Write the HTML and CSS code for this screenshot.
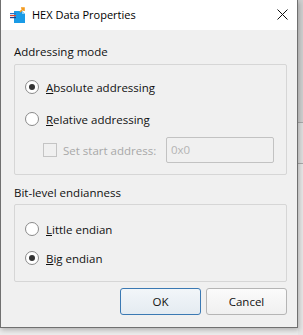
FILE: index.html
```html
<!DOCTYPE html>
<html lang="en">
<head>
    <meta charset="UTF-8">
    <title>HEX Data Properties</title>
    <link rel="stylesheet" href="styles.css">
</head>
<body>
    <div class="window">
        <div class="titlebar">
            <svg class="app-icon" width="17" height="17" viewBox="0 0 17 17">
                <path d="M4 5 h8 l3 3 v9 h-11 z" fill="#1a9be6"/>
                <path d="M12 5 v3 h3 z" fill="#8fd0f5"/>
                <path d="M10 6 l4 -4 M11 2 h3 v3" stroke="#f39a1e" stroke-width="1.6" fill="none"/>
                <rect x="0" y="7" width="6" height="1.2" fill="#2672c8"/>
                <rect x="0" y="9" width="6" height="1.2" fill="#e0432a"/>
                <rect x="0" y="11" width="6" height="1.2" fill="#1e3f8c"/>
            </svg>
            <span class="title">HEX Data Properties</span>
            <svg class="close" width="11" height="11" viewBox="0 0 11 11">
                <path d="M0.5 0.5 L10.5 10.5 M10.5 0.5 L0.5 10.5" stroke="#111" stroke-width="1"/>
            </svg>
        </div>
        <div class="content">
            <div class="group-label">Addressing mode</div>
            <div class="group group-address">
                <div class="row">
                    <span class="radio checked"></span>
                    <span><u>A</u>bsolute addressing</span>
                </div>
                <div class="row">
                    <span class="radio"></span>
                    <span><u>R</u>elative addressing</span>
                </div>
                <div class="row row-start">
                    <span class="checkbox"></span>
                    <span class="disabled">Set start address:</span>
                    <div class="text-input">0x0</div>
                </div>
            </div>

            <div class="group-label second">Bit-level endianness</div>
            <div class="group group-endian">
                <div class="row">
                    <span class="radio"></span>
                    <span><u>L</u>ittle endian</span>
                </div>
                <div class="row">
                    <span class="radio checked"></span>
                    <span><u>B</u>ig endian</span>
                </div>
            </div>

            <div class="buttons">
                <button class="btn default">OK</button>
                <button class="btn">Cancel</button>
            </div>
        </div>
    </div>
    <div class="behind">
        <div class="behind-top"></div>
        <div class="behind-mid"></div>
        <div class="behind-low"></div>
    </div>
</body>
</html>
```

FILE: styles.css
```css
/* Dialog window */
body {
    margin: 0;
    padding: 0;
    width: 303px;
    height: 335px;
    overflow: hidden;
    display: flex;
    align-items: flex-start;
    background-color: #ececec;
    font-family: "Open Sans", "Noto Sans", sans-serif;
    font-size: 11.5px;
    color: #111;
}

.window {
    width: 296px;
    height: 327px;
    flex-shrink: 0;
    background-color: #f0f0f0;
    border-left: 1px solid #707070;
    border-right: 1px solid #707070;
    border-bottom: 1px solid #707070;
    box-shadow: 1px 2px 5px rgba(0, 0, 0, 0.25);
    position: relative;
    z-index: 1;
}

.titlebar {
    height: 30px;
    background-color: #fff;
    display: flex;
    align-items: center;
    padding-left: 9px;
    padding-right: 9px;
}

.app-icon {
    margin-right: 5px;
    margin-top: -2px;
}

.title {
    flex: 1;
    font-size: 11px;
    color: #000;
    margin-top: -1px;
}

.close {
    margin-top: -2px;
}

.content {
    padding: 14px 10px 0 13px;
}

.group-label {
    line-height: 16px;
    height: 16px;
    margin-bottom: 4px;
}

.group-label.second {
    margin-top: 10px;
    margin-bottom: 3px;
}

.group {
    border: 1px solid #d6d6d6;
    border-radius: 2px;
    padding: 10px 10px 11px 10px;
    display: flex;
    flex-direction: column;
}

.group-address .row + .row {
    margin-top: 8px;
}

.group-address .row-start {
    margin-top: 6px !important;
    height: 26px;
    padding-left: 18px;
}

.group-endian {
    padding-top: 12px;
    padding-bottom: 11px;
}

.group-endian .row + .row {
    margin-top: 5px;
}

.row {
    height: 24px;
    display: flex;
    align-items: center;
}

.radio {
    width: 12px;
    height: 12px;
    border: 1px solid #8a8a8a;
    border-radius: 50%;
    background-color: #fff;
    margin-right: 7px;
    display: flex;
    align-items: center;
    justify-content: center;
}

.radio.checked::after {
    content: "";
    width: 6px;
    height: 6px;
    border-radius: 50%;
    background-color: #333;
}

.checkbox {
    width: 12px;
    height: 12px;
    border: 1px solid #c4c4c4;
    margin-right: 6px;
}

.disabled {
    color: #a8a8a8;
}

.text-input {
    margin-left: auto;
    margin-right: 2px;
    width: 102px;
    height: 24px;
    line-height: 24px;
    padding-left: 4px;
    border: 1px solid #c2c2c2;
    border-radius: 2px;
    color: #b4b4b4;
}

.buttons {
    display: flex;
    justify-content: flex-end;
    gap: 5px;
    margin-top: 6px;
}

.btn {
    width: 81px;
    height: 27px;
    font-family: inherit;
    font-size: 11.5px;
    color: #111;
    border: 1px solid #b5b5b5;
    border-radius: 3px;
    background: linear-gradient(#fbfbfb, #f0f0f0);
    padding: 0;
}

.btn.default {
    border-color: #3b79b3;
    background: linear-gradient(#f2f6f9, #e4ebf1);
}

/* Background window peeking out at the right edge */
.behind {
    flex: 1;
    height: 335px;
    display: flex;
    flex-direction: column;
}

.behind-top {
    height: 122px;
    background-color: #cfcfcf;
    border-bottom: 1px solid #a9a9a9;
}

.behind-mid {
    height: 40px;
    background-color: #dedede;
    border-bottom: 1px solid #a9a9a9;
}

.behind-low {
    flex: 1;
    background-color: #e6e6e6;
}
```
